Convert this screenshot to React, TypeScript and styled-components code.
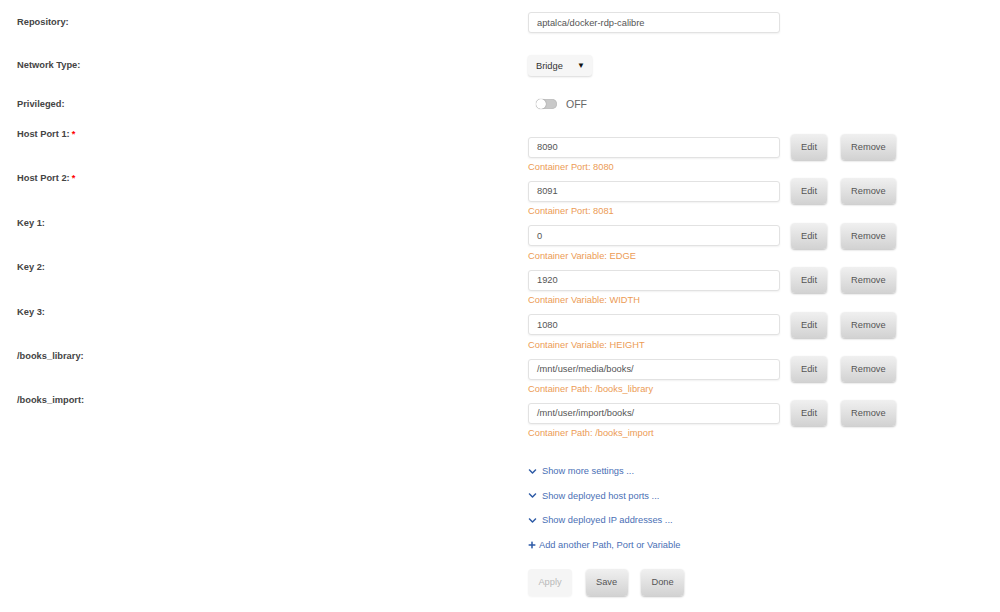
import styled, { createGlobalStyle } from "styled-components";
import { FaChevronDown, FaPlus } from "react-icons/fa";

const GlobalStyle = createGlobalStyle`
  body {
    margin: 0;
    background: #ffffff;
    font-family: "Liberation Sans", Arial, sans-serif;
    font-size: 9.3px;
    color: #555555;
  }
`;

const Page = styled.div`
  padding: 12px 17px 0 17px;
  width: 1000px;
  height: 612px;
  box-sizing: border-box;
`;

const Row = styled.div<{ $gap?: number }>`
  display: grid;
  grid-template-columns: 511px 1fr;
  margin-top: ${(p) => p.$gap ?? 0}px;
`;

const Label = styled.div<{ $lh: number }>`
  font-weight: bold;
  color: #444444;
  line-height: ${(p) => p.$lh}px;
`;

const Required = styled.span`
  color: #ff0000;
  margin-left: 2px;
`;

const TextInput = styled.div<{ $width?: number }>`
  width: ${(p) => p.$width ?? 252}px;
  height: 21px;
  box-sizing: border-box;
  border: 1px solid #e2e2e2;
  border-radius: 3px;
  box-shadow: 0 1px 2px rgba(0, 0, 0, 0.06);
  padding-left: 8px;
  display: flex;
  align-items: center;
  color: #555555;
  background: #ffffff;
`;

const Select = styled.div`
  width: 64px;
  height: 21px;
  box-sizing: border-box;
  border-radius: 3px;
  background: #f6f6f6;
  box-shadow: 0 1px 2px rgba(0, 0, 0, 0.15);
  display: flex;
  align-items: center;
  justify-content: space-between;
  padding: 0 7px 0 8px;
  color: #333333;
`;

const Caret = styled.span`
  font-size: 8px;
  color: #111111;
`;

const ToggleLine = styled.div`
  display: flex;
  align-items: center;
  height: 20px;
  gap: 9px;
  padding-left: 8px;
`;

const ToggleTrack = styled.div`
  position: relative;
  width: 21px;
  height: 10px;
  border-radius: 5px;
  background: #c9c9c9;
  box-shadow: inset 0 0 1px rgba(0, 0, 0, 0.3);
`;

const ToggleKnob = styled.div`
  position: absolute;
  left: 0;
  top: 0;
  width: 10px;
  height: 10px;
  border-radius: 50%;
  background: #ffffff;
  box-shadow: 0 0 1px rgba(0, 0, 0, 0.5);
`;

const ToggleText = styled.span`
  font-size: 10.5px;
  color: #666666;
`;

const PortsSpacer = styled.div`
  height: 14px;
`;

const FieldContent = styled.div`
  padding-top: 6px;
`;

const FieldLine = styled.div`
  display: flex;
  align-items: center;
`;

const Button = styled.button<{ $disabled?: boolean; $ml?: number }>`
  height: 26px;
  margin-left: ${(p) => p.$ml ?? 0}px;
  padding: 0 10px;
  border: none;
  border-radius: 4px;
  font-family: "Liberation Sans", Arial, sans-serif;
  font-size: 9.3px;
  color: ${(p) => (p.$disabled ? "#b9b9b9" : "#555555")};
  background: ${(p) =>
    p.$disabled
      ? "#f5f5f5"
      : "linear-gradient(to bottom, #f0f0f0 0%, #d2d2d2 100%)"};
  box-shadow: ${(p) =>
    p.$disabled
      ? "0 1px 2px rgba(0, 0, 0, 0.05)"
      : "0 1px 2px rgba(0, 0, 0, 0.25)"};
  cursor: pointer;
`;

const Hint = styled.div`
  color: #ec9b55;
  margin-top: 2px;
  line-height: 10.4px;
`;

const Links = styled.div`
  margin-left: 511px;
  margin-top: 20px;
  display: flex;
  flex-direction: column;
`;

const LinkItem = styled.a<{ $gap?: number }>`
  display: flex;
  align-items: center;
  line-height: 24.7px;
  color: #4a6fb5;
  text-decoration: none;
  gap: ${(p) => p.$gap ?? 5}px;

  svg {
    color: #2d5aa6;
  }
`;

const Actions = styled.div`
  margin-left: 511px;
  margin-top: 11px;
  display: flex;
  gap: 13.5px;

  ${Button} {
    height: 27px;
    padding: 0 10.4px;
  }
`;

type Field = {
  label: string;
  required?: boolean;
  value: string;
  hint: string;
};

const fields: Field[] = [
  { label: "Host Port 1:", required: true, value: "8090", hint: "Container Port: 8080" },
  { label: "Host Port 2:", required: true, value: "8091", hint: "Container Port: 8081" },
  { label: "Key 1:", value: "0", hint: "Container Variable: EDGE" },
  { label: "Key 2:", value: "1920", hint: "Container Variable: WIDTH" },
  { label: "Key 3:", value: "1080", hint: "Container Variable: HEIGHT" },
  { label: "/books_library:", value: "/mnt/user/media/books/", hint: "Container Path: /books_library" },
  { label: "/books_import:", value: "/mnt/user/import/books/", hint: "Container Path: /books_import" },
];

const links = [
  "Show more settings ...",
  "Show deployed host ports ...",
  "Show deployed IP addresses ...",
];

export default function App() {
  return (
    <>
      <GlobalStyle />
      <Page>
        <Row>
          <Label $lh={20}>Repository:</Label>
          <TextInput>aptalca/docker-rdp-calibre</TextInput>
        </Row>
        <Row $gap={22}>
          <Label $lh={21}>Network Type:</Label>
          <div>
            <Select>
              Bridge <Caret>▼</Caret>
            </Select>
          </div>
        </Row>
        <Row $gap={18}>
          <Label $lh={20}>Privileged:</Label>
          <ToggleLine>
            <ToggleTrack>
              <ToggleKnob />
            </ToggleTrack>
            <ToggleText>OFF</ToggleText>
          </ToggleLine>
        </Row>
        <PortsSpacer />
        {fields.map((f) => (
          <Row key={f.label}>
            <Label $lh={12}>
              {f.label}
              {f.required && <Required>*</Required>}
            </Label>
            <FieldContent>
              <FieldLine>
                <TextInput>{f.value}</TextInput>
                <Button $ml={11}>Edit</Button>
                <Button $ml={14}>Remove</Button>
              </FieldLine>
              <Hint>{f.hint}</Hint>
            </FieldContent>
          </Row>
        ))}
        <Links>
          {links.map((l) => (
            <LinkItem key={l} href="#">
              <FaChevronDown size={9} />
              {l}
            </LinkItem>
          ))}
          <LinkItem href="#" $gap={3}>
            <FaPlus size={8} />
            Add another Path, Port or Variable
          </LinkItem>
        </Links>
        <Actions>
          <Button $disabled>Apply</Button>
          <Button>Save</Button>
          <Button>Done</Button>
        </Actions>
      </Page>
    </>
  );
}
